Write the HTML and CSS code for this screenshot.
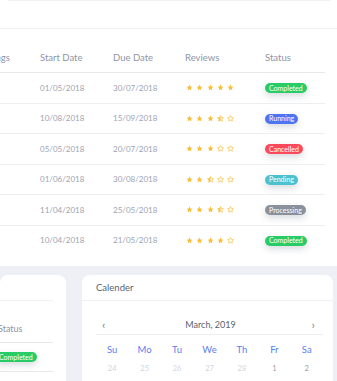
FILE: index.html
```html
<!DOCTYPE html>
<html lang="en">
<head>
  <meta charset="UTF-8" />
  <meta name="viewport" content="width=device-width, initial-scale=1.0"/>
  <title>Projects</title>
  <link rel="stylesheet" href="styles.css">
</head>
<body>

  <svg class="defs" width="0" height="0">
    <defs>
      <clipPath id="left-half"><rect x="0" y="0" width="12" height="24"/></clipPath>
      <path id="star-shape" d="M12 2l3.09 6.26L22 9.27l-5 4.87 1.18 6.88L12 17.77l-6.18 3.25L7 14.14 2 9.27l6.91-1.01z"/>
    </defs>
    <symbol id="star-full" viewBox="0 0 24 24"><use href="#star-shape" fill="currentColor"/></symbol>
    <symbol id="star-empty" viewBox="0 0 24 24"><use href="#star-shape" fill="none" stroke="currentColor" stroke-width="2.4" stroke-linejoin="round"/></symbol>
    <symbol id="star-half" viewBox="0 0 24 24">
      <use href="#star-shape" fill="none" stroke="currentColor" stroke-width="2.4" stroke-linejoin="round"/>
      <use href="#star-shape" fill="currentColor" clip-path="url(#left-half)"/>
    </symbol>
  </svg>

  <div class="edge"></div>

  <section class="card main">
    <div class="card-head"></div>
    <div class="table">
      <div class="row head">
        <span>Meetings</span><span>Start Date</span><span>Due Date</span><span>Reviews</span><span>Status</span>
      </div>
      <div class="row" data-stars="5"><span></span><span>01/05/2018</span><span>30/07/2018</span><span class="stars"></span><span><em class="badge green">Completed</em></span></div>
      <div class="row" data-stars="3.5"><span></span><span>10/08/2018</span><span>15/09/2018</span><span class="stars"></span><span><em class="badge blue">Running</em></span></div>
      <div class="row" data-stars="3"><span></span><span>05/05/2018</span><span>20/07/2018</span><span class="stars"></span><span><em class="badge red">Cancelled</em></span></div>
      <div class="row" data-stars="2.5"><span></span><span>01/06/2018</span><span>30/08/2018</span><span class="stars"></span><span><em class="badge teal">Pending</em></span></div>
      <div class="row" data-stars="3.5"><span></span><span>11/04/2018</span><span>25/05/2018</span><span class="stars"></span><span><em class="badge grey">Processing</em></span></div>
      <div class="row" data-stars="4"><span></span><span>10/04/2018</span><span>21/05/2018</span><span class="stars"></span><span><em class="badge green">Completed</em></span></div>
    </div>
  </section>

  <div class="bottom">
    <section class="card side">
      <div class="card-head"></div>
      <div class="side-row label">Status</div>
      <div class="side-row"><em class="badge green">Completed</em></div>
    </section>

    <section class="card calendar">
      <div class="card-head title">Calender</div>
      <div class="cal-nav">
        <span class="arrow">&#8249;</span>
        <span class="month">March, 2019</span>
        <span class="arrow">&#8250;</span>
      </div>
      <div class="cal-grid days">
        <span>Su</span><span>Mo</span><span>Tu</span><span>We</span><span>Th</span><span>Fr</span><span>Sa</span>
      </div>
      <div class="cal-grid dates">
        <span class="muted">24</span><span class="muted">25</span><span class="muted">26</span><span class="muted">27</span><span class="muted">28</span><span>1</span><span>2</span>
      </div>
    </section>
  </div>

  <script src="script.js"></script>
</body>
</html>
```

FILE: script.js
```js
// fill the review column from data-stars
document.querySelectorAll('.row[data-stars]').forEach(row => {
  const rating = parseFloat(row.dataset.stars);
  const cell = row.querySelector('.stars');
  for (let i = 1; i <= 5; i++) {
    let kind = 'empty';
    if (rating >= i) kind = 'full';
    else if (rating >= i - 0.5) kind = 'half';
    cell.insertAdjacentHTML('beforeend',
      `<svg class="star"><use href="#star-${kind}"/></svg>`);
  }
});
```

FILE: styles.css
```css
html, body {
  margin: 0;
  overflow: hidden;
}

body {
  width: 337px;
  height: 381px;
  background-color: #eef0f5;
  font-family: Lato, "Noto Sans", sans-serif;
  color: #8d93a3;
}

.defs {
  position: absolute;
}

.edge {
  height: 1px;
  background-color: #f0f1f4;
  margin: 0 7px 0 8px;
  position: relative;
}

.card {
  background-color: #fff;
}

.main {
  margin-top: -1px;
  padding-top: 1px;
  padding-bottom: 11px;
}

.main .card-head {
  height: 27px;
  border-bottom: 1px solid #f0f1f4;
}

.table {
  margin-left: -29px;
  margin-right: 12px;
}

.row {
  display: grid;
  grid-template-columns: 69px 73px 72px 80px 1fr;
  align-items: center;
  height: 29.5px;
  border-bottom: 1px solid #eceef2;
  font-size: 8px;
  color: #9ea3b2;
}

.row:last-child {
  border-bottom: none;
}

.row.head {
  height: 44px;
  align-items: end;
  padding-bottom: 9px;
  box-sizing: border-box;
  border-bottom: 1px solid #e6e8ec;
  font-size: 9.5px;
  color: #8f95a4;
}

.stars {
  display: flex;
  gap: 3.3px;
  padding-left: 1px;
  color: #f8bf3c;
}

.star {
  width: 7px;
  height: 7px;
}

.badge {
  display: inline-block;
  font-style: normal;
  font-size: 7px;
  line-height: 9px;
  padding: 0.5px 4px;
  border-radius: 5px;
  color: #fff;
  box-shadow: 0 3px 7px rgba(40, 50, 70, 0.18);
}

.green { background-color: #28cc67; }
.blue { background-color: #4e74f2; }
.red { background-color: #fc4a5c; }
.teal { background-color: #4cc2cf; }
.grey { background-color: #8b909d; }

.bottom {
  display: flex;
  gap: 16px;
  padding-top: 9px;
  padding-right: 4px;
  height: 130px;
  box-sizing: border-box;
}

.bottom .card {
  border-radius: 8px 8px 0 0;
}

.bottom .card-head {
  height: 25px;
  border-bottom: 1px solid #f0f1f4;
}

.side {
  width: 66px;
  border-radius: 0 8px 0 0;
  padding-right: 13px;
  box-sizing: border-box;
}

.side-row {
  height: 28px;
  margin-left: -5px;
  display: flex;
  align-items: center;
  border-bottom: 1px solid #e6e8ec;
}

.side-row.label {
  height: 42px;
  margin-left: -2px;
  align-items: end;
  padding-bottom: 8px;
  box-sizing: border-box;
  font-size: 9px;
  color: #8f95a4;
}

.calendar {
  flex: 1;
  padding: 0 10px 0 14px;
}

.calendar .card-head {
  margin: 0 -10px 0 -14px;
  padding-left: 14px;
  display: flex;
  align-items: center;
  font-size: 9.5px;
  color: #5b5f6b;
}

.cal-nav {
  height: 34px;
  display: flex;
  align-items: end;
  justify-content: space-between;
  padding: 0 8px 4px 6px;
  box-sizing: border-box;
  border-bottom: 1px solid #eceef2;
  font-size: 9px;
  color: #5b5f6b;
}

.cal-nav .arrow {
  font-size: 12px;
  line-height: 11px;
  color: #7b808d;
}

.cal-nav .month {
  padding-left: 4px;
}

.cal-grid {
  display: grid;
  grid-template-columns: repeat(7, 1fr);
  justify-items: center;
  align-items: center;
}

.days {
  height: 22px;
  padding-top: 3px;
  font-size: 9.5px;
  color: #5b80f2;
}

.dates {
  height: 14px;
  padding-top: 1px;
  font-size: 7.5px;
  color: #9ba0ad;
}

.dates .muted {
  color: #d3d6de;
}
```
